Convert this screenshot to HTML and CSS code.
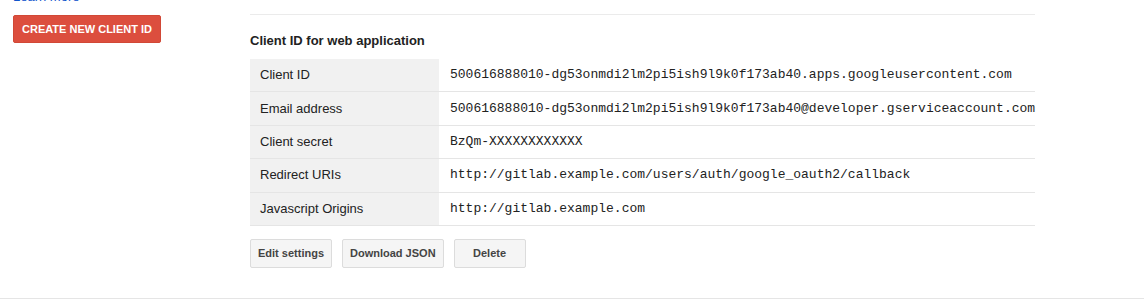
FILE: index.html
```html
<!DOCTYPE html>
<html lang="en">

<head>
    <meta charset="UTF-8">
    <meta name="viewport" content="width=device-width, initial-scale=1.0">
    <title>Client ID for web application</title>
    <link rel="stylesheet" href="styles.css">
</head>

<body>
    <div class="page">
        <div class="sidebar">
            <a class="learn" href="#">Learn more</a>
            <button class="btn-create">Create new client ID</button>
        </div>
        <div class="main">
            <h3>Client ID for web application</h3>
            <table class="details">
                <tr>
                    <th>Client ID</th>
                    <td>500616888010-dg53onmdi2lm2pi5ish9l9k0f173ab40.apps.googleusercontent.com</td>
                </tr>
                <tr>
                    <th>Email address</th>
                    <td>500616888010-dg53onmdi2lm2pi5ish9l9k0f173ab40@developer.gserviceaccount.com</td>
                </tr>
                <tr>
                    <th>Client secret</th>
                    <td>BzQm-XXXXXXXXXXXX</td>
                </tr>
                <tr>
                    <th>Redirect URIs</th>
                    <td>http://gitlab.example.com/users/auth/google_oauth2/callback</td>
                </tr>
                <tr>
                    <th>Javascript Origins</th>
                    <td>http://gitlab.example.com</td>
                </tr>
            </table>
            <div class="actions">
                <button class="btn">Edit settings</button>
                <button class="btn">Download JSON</button>
                <button class="btn">Delete</button>
            </div>
        </div>
    </div>
</body>

</html>
```

FILE: styles.css
```css
body {
    margin: 0;
    padding: 0;
    font-family: Arial, "Liberation Sans", sans-serif;
    font-size: 13px;
    color: #222;
    background-color: #fff;
}

.page {
    display: flex;
    height: 298px;
    border-bottom: 1px solid #e5e5e5;
    overflow: hidden;
}

.sidebar {
    width: 237px;
    padding-left: 13px;
    display: flex;
    flex-direction: column;
    align-items: flex-start;
}

.learn {
    display: block;
    margin-top: -11px;
    line-height: 16px;
    color: #15c;
    text-decoration: none;
}

.btn-create {
    margin-top: 10px;
    height: 28px;
    width: 148px;
    padding: 0;
    border: 1px solid #d14836;
    border-radius: 2px;
    background-color: #dc4e3e;
    color: #fff;
    font-family: Arial, "Liberation Sans", sans-serif;
    font-size: 11px;
    font-weight: bold;
    text-transform: uppercase;
}

.main {
    width: 785px;
    margin-top: 14px;
    border-top: 1px solid #ebebeb;
}

.main h3 {
    margin: 18px 0 10px;
    font-size: 13px;
    line-height: 16px;
    font-weight: bold;
    color: #222;
}

.details {
    width: 100%;
    table-layout: fixed;
    border-collapse: collapse;
}

.details th,
.details td {
    height: 32.4px;
    padding: 0 10px;
    border-bottom: 1px solid #e5e5e5;
    text-align: left;
    vertical-align: middle;
    line-height: 16px;
}

.details th {
    width: 169px;
    background-color: #f1f1f1;
    font-weight: normal;
    color: #222;
}

.details td {
    padding-left: 11px;
    font-family: "Courier New", "Liberation Mono", monospace;
    font-size: 13px;
    color: #222;
    white-space: nowrap;
}

.actions {
    display: flex;
    gap: 10px;
    margin-top: 13px;
}

.btn {
    height: 29px;
    min-width: 72px;
    padding: 0 7px;
    border: 1px solid #dcdcdc;
    border-radius: 2px;
    background-color: #f5f5f5;
    color: #444;
    font-family: Arial, "Liberation Sans", sans-serif;
    font-size: 11px;
    font-weight: bold;
}
```
